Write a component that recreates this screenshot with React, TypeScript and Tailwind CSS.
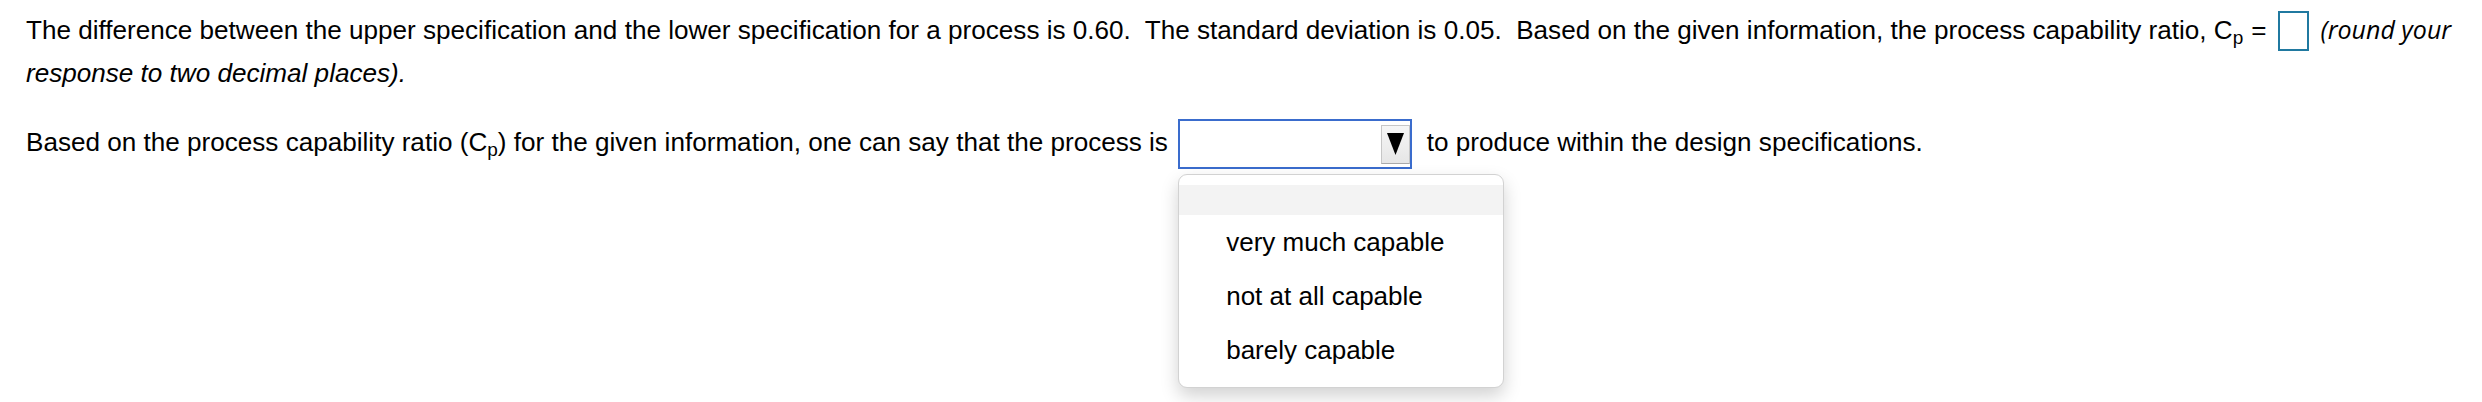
import { useState } from 'react';

const options = ['very much capable', 'not at all capable', 'barely capable'];

function CpLabel() {
  return (
    <span>
      C<sub className="text-[19px]">p</sub>
    </span>
  );
}

export default function App() {
  const [value] = useState('');

  return (
    <div className="min-h-[402px] w-[2482px] bg-white text-black font-['Liberation_Sans',Arial,sans-serif] text-[26.1px] leading-[43px] pl-[26px] pt-[8px]">
      <p className="whitespace-pre">
        {'The difference between the upper specification and the lower specification for a process is 0.60.  The standard deviation is 0.05.  Based on the given information, the process capability ratio, '}
        <CpLabel />
        <span className="ml-[8px] mr-[4px]">=</span>
        <span className="inline-block align-middle w-[31px] h-[40px] border-2 border-[#2079a0] bg-white relative top-[-1px] ml-[7px]" />
        <span className="ml-[12px] italic font-['Open_Sans',sans-serif] text-[25px]">(round your</span>
        <br />
        <span className="italic">response to two decimal places).</span>
      </p>

      <div className="mt-[24px] whitespace-pre">
        {'Based on the process capability ratio ('}
        <CpLabel />
        {') for the given information, one can say that the process is '}
        <span className="relative inline-block align-middle ml-[3px]">
          <span className="flex items-center justify-end w-[234px] h-[50px] border-2 border-[#3a6ccd] bg-white">
            {value}
            <span className="flex items-center justify-center w-[29px] h-[39px] bg-gradient-to-b from-[#f6f6f6] to-[#e6e6e6] border border-[#c6c6c6] border-b-[#a9a9a9]">
              <svg width="19" height="24" viewBox="0 0 19 24">
                <polygon points="1,1 18,1 9.5,23" fill="#000" />
              </svg>
            </span>
          </span>
          <div className="absolute left-0 top-[55px] w-[326px] z-10 rounded-[9px] border border-[#d2d2d2] bg-white pt-[10px] pb-[10px] shadow-[0_8px_18px_rgba(0,0,0,0.18)] leading-normal">
            <div className="h-[30px] bg-[#f3f3f3]" />
            {options.map(o => (
              <div key={o} className="h-[54px] flex items-center pl-[47px] text-[26px] text-black">
                {o}
              </div>
            ))}
          </div>
        </span>
        {'  to produce within the design specifications.'}
      </div>
    </div>
  );
}
